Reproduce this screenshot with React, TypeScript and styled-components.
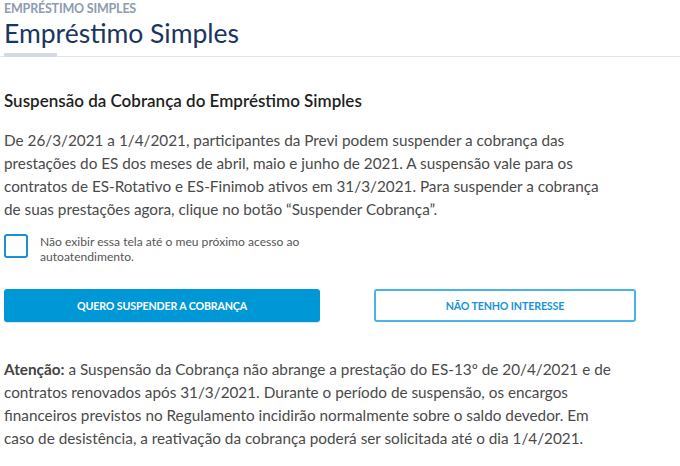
import React from "react";
import styled, { createGlobalStyle } from "styled-components";

const Global = createGlobalStyle`
  html, body { margin: 0; padding: 0; background: #fff; }
  body { font-family: Lato, "Open Sans", sans-serif; -webkit-font-smoothing: antialiased; }
`;

const Page = styled.div`
  width: 680px;
  height: 466px;
  overflow: hidden;
  background: #fff;
`;

const Header = styled.header`
  position: relative;
  padding: 2px 4px 0;
  height: 54px;
  border-bottom: 1px solid #e3e5e8;
`;

const Breadcrumb = styled.div`
  font-size: 12.5px;
  font-weight: 700;
  color: #8e9bb0;
  letter-spacing: -0.2px;
  line-height: 14px;
`;

const Title = styled.h1`
  margin: 0;
  font-size: 26.5px;
  font-weight: 400;
  color: #1b365d;
  line-height: 34px;
`;

const Accent = styled.span`
  position: absolute;
  left: 4px;
  bottom: -1px;
  width: 53px;
  height: 4px;
  background: #d4dbe4;
`;

const Content = styled.main`
  width: 632px;
  padding: 33px 0 0 4px;
`;

const Subtitle = styled.h2`
  margin: 0 0 18px;
  font-size: 17px;
  font-weight: 600;
  color: #1f1f1f;
  line-height: 21px;
`;

const Paragraph = styled.p<{ $width: number }>`
  margin: 0;
  font-size: 15.3px;
  line-height: 23px;
  color: #4a4a4a;
  width: ${(p) => p.$width}px;
`;

const CheckRow = styled.label`
  display: flex;
  align-items: flex-start;
  gap: 12px;
  margin-top: 13px;
`;

const Box = styled.span`
  flex: none;
  width: 20px;
  height: 20px;
  border: 2px solid #1a8fd6;
  border-radius: 3px;
`;

const CheckText = styled.span`
  font-size: 12.1px;
  line-height: 15px;
  color: #555;
  width: 280px;
`;

const Buttons = styled.div`
  display: grid;
  grid-template-columns: 316px 262px;
  justify-content: space-between;
  margin-top: 25px;
  margin-bottom: 36px;
`;

const Button = styled.button<{ $primary?: boolean }>`
  height: 33px;
  border-radius: 3px;
  font-family: Lato, sans-serif;
  font-size: 10.7px;
  font-weight: 700;
  letter-spacing: -0.15px;
  text-transform: uppercase;
  cursor: pointer;
  background: ${(p) => (p.$primary ? "#0097d7" : "#fff")};
  color: ${(p) => (p.$primary ? "#fff" : "#1a93d6")};
  border: ${(p) => (p.$primary ? "none" : "2px solid #48b3e8")};
  box-shadow: ${(p) => (p.$primary ? "0 1px 1px rgba(0,0,0,0.12)" : "none")};
`;

const Strong = styled.strong`
  font-weight: 700;
  color: #444;
`;

export default function App() {
  return (
    <Page>
      <Global />
      <Header>
        <Breadcrumb>EMPRÉSTIMO SIMPLES</Breadcrumb>
        <Title>Empréstimo Simples</Title>
        <Accent />
      </Header>
      <Content>
        <Subtitle>Suspensão da Cobrança do Empréstimo Simples</Subtitle>
        <Paragraph $width={612}>
          De 26/3/2021 a 1/4/2021, participantes da Previ podem suspender a cobrança das
          prestações do ES dos meses de abril, maio e junho de 2021. A suspensão vale para os
          contratos de ES-Rotativo e ES-Finimob ativos em 31/3/2021. Para suspender a cobrança
          de suas prestações agora, clique no botão “Suspender Cobrança”.
        </Paragraph>
        <CheckRow>
          <Box />
          <CheckText>Não exibir essa tela até o meu próximo acesso ao autoatendimento.</CheckText>
        </CheckRow>
        <Buttons>
          <Button $primary>Quero suspender a cobrança</Button>
          <Button>Não tenho interesse</Button>
        </Buttons>
        <Paragraph $width={616}>
          <Strong>Atenção:</Strong> a Suspensão da Cobrança não abrange a prestação do ES-13º de
          20/4/2021 e de contratos renovados após 31/3/2021. Durante o período de suspensão, os
          encargos financeiros previstos no Regulamento incidirão normalmente sobre o saldo
          devedor. Em caso de desistência, a reativação da cobrança poderá ser solicitada até o
          dia 1/4/2021.
        </Paragraph>
      </Content>
    </Page>
  );
}
